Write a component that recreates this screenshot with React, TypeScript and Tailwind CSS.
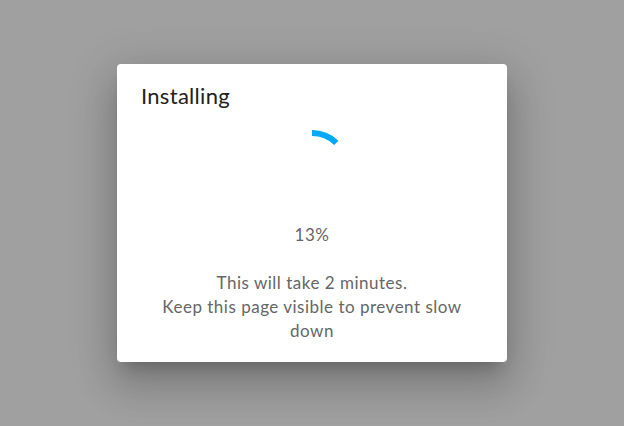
import React from "react";

export default function App() {
  const cx = 40;
  const cy = 40;
  const r = 35;
  const a0 = (-90 * Math.PI) / 180;
  const a1 = (-46 * Math.PI) / 180;
  const x0 = cx + r * Math.cos(a0);
  const y0 = cy + r * Math.sin(a0);
  const x1 = cx + r * Math.cos(a1);
  const y1 = cy + r * Math.sin(a1);
  return (
    <div
      className="w-[624px] h-[426px] bg-[#a0a0a0] flex items-center justify-center"
      style={{ fontFamily: "Lato, 'Noto Sans', sans-serif" }}
    >
      <div className="w-[390px] h-[298px] bg-white rounded-[4px] shadow-[0_11px_15px_-7px_rgba(0,0,0,0.2),0_24px_38px_3px_rgba(0,0,0,0.14),0_9px_46px_8px_rgba(0,0,0,0.12)] flex flex-col">
        <div className="px-6 pt-4 h-[48px] text-[22px] leading-[32px] tracking-[0.3px] text-[#212121]">
          Installing
        </div>
        <div className="flex flex-col items-center px-6">
          <svg width="80" height="80" viewBox="0 0 80 80" className="mt-4">
            <path
              d={`M ${x0} ${y0} A ${r} ${r} 0 0 1 ${x1} ${y1}`}
              fill="none"
              stroke="#03a9f4"
              strokeWidth="6"
            />
          </svg>
          <div className="mt-[15px] text-[17px] leading-[24px] tracking-[0.5px] text-[#666666]">13%</div>
          <div className="mt-6 w-[320px] text-center text-[17px] leading-[24px] tracking-[0.5px] text-[#666666]">
            This will take 2 minutes.
            <br />
            Keep this page visible to prevent slow down
          </div>
        </div>
      </div>
    </div>
  );
}
